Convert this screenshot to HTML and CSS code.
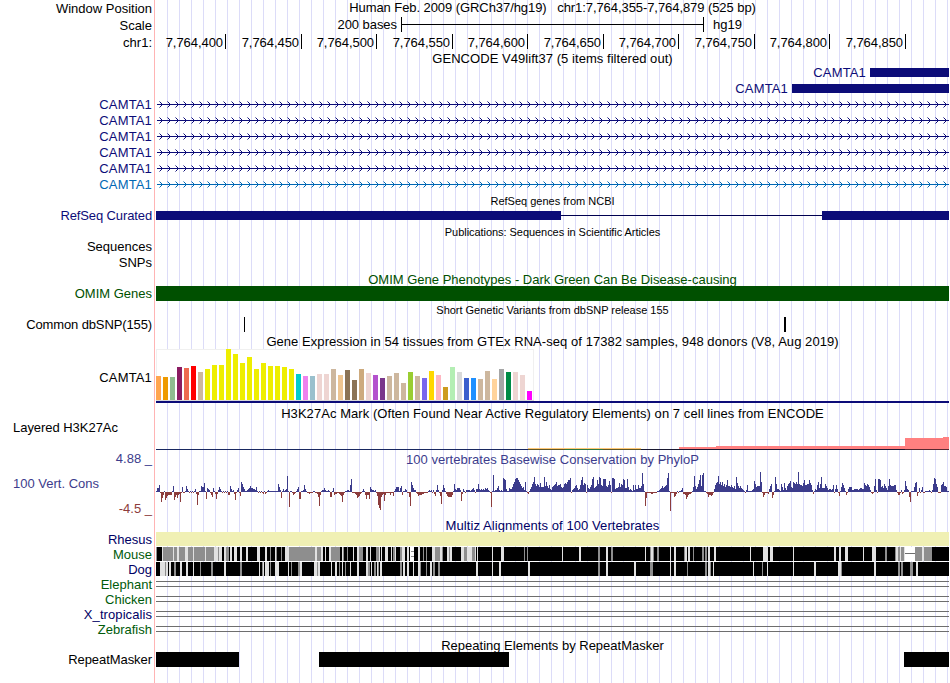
FILE: index.html
```html
<!DOCTYPE html>
<html lang="en">
<head>
<meta charset="utf-8">
<title>chr1:7,764,355-7,764,879</title>
<link rel="stylesheet" href="styles.css">
</head>
<body>
<main class="browser">
  <div class="row h17"><div class="label">Window Position</div><div class="title position">Human Feb. 2009 (GRCh37/hg19) &nbsp; chr1:7,764,355-7,764,879 (525 bp)</div></div>
  <div class="row h17"><div class="label">Scale</div><div class="scale"><span class="scale-text">200 bases</span><span class="scale-bar"></span><span class="scale-db">hg19</span></div></div>
  <div class="row h17"><div class="label">chr1:</div><div class="ruler"><span class="c70">7,764,400</span><span class="c76">7,764,450</span><span>7,764,500</span><span class="c76">7,764,550</span><span>7,764,600</span><span class="c76">7,764,650</span><span>7,764,700</span><span class="c76">7,764,750</span><span>7,764,800</span><span class="c76">7,764,850</span></div></div>
  <div class="row h13"><div></div><div class="title gencode">GENCODE V49lift37 (5 items filtered out)</div></div>
  <div class="row h16"><div></div><div class="exon"><span class="gene">CAMTA1</span><span class="exon-bar w79"></span></div></div>
  <div class="row h16"><div></div><div class="exon"><span class="gene">CAMTA1</span><span class="exon-bar w157"></span></div></div>
  <div class="row h16 navy"><div class="label gene">CAMTA1</div><svg class="intron" width="793" height="16"></svg></div>
  <div class="row h16 navy"><div class="label gene">CAMTA1</div><svg class="intron" width="793" height="16"></svg></div>
  <div class="row h16 navy"><div class="label gene">CAMTA1</div><svg class="intron" width="793" height="16"></svg></div>
  <div class="row h16 navy"><div class="label gene">CAMTA1</div><svg class="intron" width="793" height="16"></svg></div>
  <div class="row h16 navy"><div class="label gene">CAMTA1</div><svg class="intron" width="793" height="16"></svg></div>
  <div class="row h16 azure"><div class="label gene">CAMTA1</div><svg class="intron" width="793" height="16"></svg></div>
  <div class="row h16"><div></div><div class="title small t-ref">RefSeq genes from NCBI</div></div>
  <div class="row h16 navy"><div class="label refseq">RefSeq Curated</div><svg width="793" height="16" shape-rendering="crispEdges"><rect x="0" y="7" width="793" height="1" fill="#000050"/><rect x="0" y="3" width="405" height="9" fill="currentColor"/><rect x="666" y="3" width="127" height="9" fill="currentColor"/></svg></div>
  <div class="row h15"><div></div><div class="title small t-pub">Publications: Sequences in Scientific Articles</div></div>
  <div class="row h16"><div class="label">Sequences</div></div>
  <div class="row h16"><div class="label">SNPs</div></div>
  <div class="row h15 omim"><div></div><div class="title">OMIM Gene Phenotypes - Dark Green Can Be Disease-causing</div></div>
  <div class="row h15 omim"><div class="label">OMIM Genes</div><div class="fill"></div></div>
  <div class="row h16"><div></div><div class="title small t-snp">Short Genetic Variants from dbSNP release 155</div></div>
  <div class="row h16"><div class="label common">Common dbSNP(155)</div><svg width="793" height="16" shape-rendering="crispEdges"><rect x="88" y="0" width="1" height="15"/><rect x="628" y="0" width="2" height="15"/></svg></div>
  <div class="row h16"><div></div><div class="title t-gtex">Gene Expression in 54 tissues from GTEx RNA-seq of 17382 samples, 948 donors (V8, Aug 2019)</div></div>
  <div class="row h56"><div class="label gtex-label">CAMTA1</div><svg id="gtex" width="793" height="56" shape-rendering="crispEdges"></svg></div>
  <div class="row h16"><div></div><div class="title t-h3k">H3K27Ac Mark (Often Found Near Active Regulatory Elements) on 7 cell lines from ENCODE</div></div>
  <div class="row h30"><div class="label left h3k-label">Layered H3K27Ac</div><svg width="793" height="30" shape-rendering="crispEdges"><path fill="#ffc878" d="M372 27h113v1H372z"/><path fill="#ff8080" d="M523 26h37v-1h189v-8h38v-1h6v12H523z"/><path fill="#182860" d="M0 28h372v1H0z"/><path fill="#605828" d="M372 28h113v1H372z"/><path fill="#307840" d="M409 28h38v1h-38z"/><path fill="#181830" d="M485 28h264v1H485z"/><path fill="#582830" d="M749 28h44v1h-44z"/></svg></div>
  <div class="row h16 phylo"><div class="label">4.88 _</div><div class="title t-phylo">100 vertebrates Basewise Conservation by PhyloP</div></div>
  <div class="row h50"><div class="phylo-labels"><span class="phylo">100 Vert. Cons</span><span class="minimum">-4.5 _</span></div><svg id="phylop" width="793" height="50" shape-rendering="crispEdges"></svg></div>
  <div class="row h15 blue"><div></div><div class="title t-multiz">Multiz Alignments of 100 Vertebrates</div></div>
  <div class="row h15 blue"><div class="label">Rhesus</div><div class="fill rhesus"></div></div>
  <div class="row h15 green"><div class="label">Mouse</div><svg id="mouse" width="793" height="15" shape-rendering="crispEdges"></svg></div>
  <div class="row h15 blue"><div class="label">Dog</div><svg id="dog" width="793" height="15" shape-rendering="crispEdges"></svg></div>
  <div class="row h15 green"><div class="label">Elephant</div><div class="unaligned"></div></div>
  <div class="row h15 green"><div class="label">Chicken</div><div class="unaligned"></div></div>
  <div class="row h15 blue"><div class="label wide">X_tropicalis</div><div class="unaligned"></div></div>
  <div class="row h15 green"><div class="label">Zebrafish</div><div class="unaligned"></div></div>
  <div class="row h15"><div></div><div class="title t-rep">Repeating Elements by RepeatMasker</div></div>
  <div class="row h16"><div class="label repeat">RepeatMasker</div><svg width="793" height="16" shape-rendering="crispEdges"><path d="M0 0h83v15H0zM163 0h190v15H163zM748 0h45v15h-45z"/></svg></div>
</main>
<script src="tracks.js"></script>
</body>
</html>
```
FILE: styles.css
```css
body {
  margin: 0;
  background: #fff;
  color: #000;
  font: 13px/16px "Liberation Sans", Arial, sans-serif;
  overflow: hidden;
}
.browser {
  width: 949px;
  height: 683px;
  background:
    linear-gradient(#ffb4b4, #ffb4b4) 154px 0 / 1px 100% no-repeat,
    repeating-linear-gradient(90deg, #dcdcf8 0 1px, transparent 1px 12px) 167px 0 / 782px 100% no-repeat;
}
.row { display: grid; grid-template-columns: 152px 793px; column-gap: 4px; white-space: pre; }
.row svg { display: block; }
.h13 { height: 13px; }
.h15 { height: 15px; line-height: 15px; }
.h16 { height: 16px; }
.h17 { height: 17px; line-height: 17px; }
.h30 { height: 30px; }
.h50 { height: 50px; }
.h56 { height: 56px; }
.label { text-align: right; }
.left { text-align: left; padding-left: 13px; }
.h3k-label { line-height: 13px; letter-spacing: -0.04px; }
.title { text-align: center; }
.position { line-height: 15px; letter-spacing: -0.07px; }
.gencode { line-height: 15px; letter-spacing: 0.05px; }
.small { font-size: 11px; line-height: 18px; }
.t-pub { line-height: 16px; letter-spacing: -0.05px; }
.t-snp { letter-spacing: -0.02px; }
.t-gtex { line-height: 18px; letter-spacing: 0.055px; }
.t-h3k { line-height: 18px; letter-spacing: 0.06px; }
.t-phylo { line-height: 18px; letter-spacing: 0.02px; }
.t-multiz { line-height: 17px; letter-spacing: 0.08px; }
.t-rep { line-height: 17px; }
.gene, .gtex-label { line-height: 18px; letter-spacing: 0.15px; }
.gtex-label { line-height: 58px; }
.refseq { letter-spacing: -0.12px; }
.common { letter-spacing: -0.12px; }
.wide { letter-spacing: 0.08px; }
.repeat { letter-spacing: -0.06px; }
.navy, .gene { color: #0c0c78; }
.azure, .azure .gene { color: #0068b4; }
.omim { color: #005000; }
.omim .title { line-height: 17px; }
.fill { height: 15px; background: currentColor; }
.rhesus { height: 14px; background: #f0f0b4; }
.blue { color: #000064; }
.green { color: #005a0a; }
.phylo { color: #3c3c8c; }
.minimum { color: #8c3c3c; text-align: right; }

.scale { display: flex; line-height: 15px; }
.scale-text { width: 241px; margin-right: 4px; text-align: right; letter-spacing: -0.05px; }
.scale-bar {
  width: 301px;
  height: 15px;
  border: solid #000;
  border-width: 0 1px;
  background: linear-gradient(#000, #000) 0 7px / 100% 1px no-repeat;
}
.scale-db { margin-left: 9px; }
.ruler { display: flex; }
.ruler span {
  box-sizing: border-box;
  width: 75px;
  height: 15px;
  padding-right: 2px;
  border-right: 1px solid #000;
  text-align: right;
  letter-spacing: -0.06px;
}
.ruler .c70 { width: 70px; }
.ruler .c76 { width: 76px; }
.exon { display: flex; justify-content: flex-end; gap: 4px; }
.exon-bar { height: 9px; margin-top: 4px; background: #0c0c78; }
.w79 { width: 79px; }
.w157 { width: 157px; }
.phylo-labels { display: flex; flex-direction: column; }
.phylo-labels .phylo { padding: 9px 0 9px 13px; }
.unaligned {
  height: 4px;
  margin-top: 4px;
  border: solid #6e6e6e;
  border-width: 1px 0;
}
```
FILE: tracks.js
```js
const rect = (x, y, w, h, fill) =>
  `<rect x="${x}" y="${y}" width="${w}" height="${h}" fill="${fill}"/>`;

// Introns: a line with a strand arrow every 8 pixels.
document.querySelectorAll('.intron').forEach((svg) => {
  let faint = '', solid = '';
  for (let x = 3; x < 793; x += 8) {
    faint += `M${x} 5h1v1h-1zM${x} 11h1v1h-1z`;
    solid += `M${x + 1} 6h1v1h-1zM${x + 2} 7h1v3h-1zM${x + 1} 10h1v1h-1z`;
  }
  svg.setAttribute('shape-rendering', 'crispEdges');
  svg.innerHTML = `<path fill="currentColor" d="M1 8h792v1H1z${solid}"/><path fill="currentColor" fill-opacity="0.5" d="${faint}"/>`;
});

// GTEx: height and colour for each tissue.
const heights = [24,23,23,33,32,34,28,31,35,35,51,46,37,43,31,37,34,34,33,31,26,24,24,26,26,31,25,30,20,31,27,25,22,24,27,17,28,24,22,29,25,13,33,28,22,22,21,29,21,31,28,28,25,9];
const colors = ('FFA54F EE9A00 8FBC8F 8B1C62 EE6A50 FF0000 CDB79E ' + 'EEEE00 '.repeat(13) +
  '00CDCD EE82EE 9AC0CD EED5D2 EED5D2 CDB79E EEC591 8B7355 8B7355 CDAA7D EED5D2 B452CD 7A378B CDB79E CDB79E CDB79E 9ACD32 CDB79E 7A67EE FFD700 FFB6C1 CD9B1D B4EEB4 D9D9D9 3A5FCD 1E90FF CDB79E CDB79E FFD39B A6A6A6 008B45 EED5D2 EED5D2 FF00FF').split(' ');
document.getElementById('gtex').innerHTML =
  rect(0, 0, 378, 52, '#f0f0f0') + rect(1, 1, 376, 50, '#fff') + rect(0, 51, 378, 1, '#d8d8d8') +
  heights.map((h, i) => rect(i * 7, 51 - h, 5, h, '#' + colors[i])).join('') +
  rect(0, 52, 793, 2, '#0c0c78');

// PhyloP: one signed height per pixel, keyed by the first pixel of each run.
const scores = {
156:'1 4 4 7 -1 -10 -6 -3 1 -8 -6 -4 -3 -3 -3 -3 1 6 -8 -5 -3 -6 -3 -2 -10 -1 5 -1 -1 1 6 3 1 -1 1 -1 1 -1 1 3 -2 -13 -3 1',
200:'1 6 5 5 9 1 -7 4 3 2 -1 -3 -5 4 1 -2 -7 -2 2 5 3 1 -1 1 -1 1 -1 1 -3 -3 6 3 1 2 -2 -8 -1 2 4 -1 -4 10 8 5 3 1 1 2 3 4',
250:'6 4 4 3 3 2 5 1 -1 1 -1 1 -1 -2 1 -2 -1 1 2 1 1 1 1 1 1 1 1 1 8 5 2 -6 1 3 1 2 3 16 1 -15 1 1 -1 -3 -2 -1 1 3 5 -7',
300:'-7 1 1 2 7 3 1 -1 -1 -2 -1 -1 -1 1 1 -1 -1 -2 -5 -14 -3 1 2 2 4 2 1 1 2 1 -5 -5 1 4 -3 -2 -2 -1 -1 -2 -3 -4 -10 -3 -1 1 1 2 2 1',
350:'7 13 -1 -1 -1 -2 -3 -6 -5 -4 -2 -1 1 3 1 -3 -7 -3 -3 -7 5 3 2 2 1 2 -1 -4 -13 -16 -18 -5 -3 -2 -9 -3 -1 -1 -1 -1 -3 -1 -1 -4 1 3 5 5 5 1',
400:'4 6 -3 1 1 3 2 -1 -1 -5 -14 10 7 4 2 2 -1 -2 -4 -3 -3 -3 -2 -2 -1 -1 -1 -1 1 2 1 2 -1 2 -2 -4 2 7 2 -1 -4 -12 2 7 4 1 -2 -4 -5 -5',
450:'-5 -5 -3 1 8 3 2 4 4 4 2 -9 -2 3 1 -1 2 2 2 2 1 2 3 4 2 -1 3 3 8 3 2 3 2 3 2 4 3 4 2 1 -1 -15 1 17 1 2 2 4 6 2',
500:'1 2 1 14 13 12 3 1 1 4 3 3 5 8 10 13 14 14 12 10 8 6 4 5 2 10 1 -1 -2 1 3 5 8 10 15 8 6 8 7 5 9 5 5 5 15 6 10 6 4 7',
550:'3 2 5 6 7 8 10 6 7 7 8 5 4 5 8 9 8 10 12 12 14 -1 2 3 4 6 7 4 2 3 7 12 15 7 9 8 -1 7 4 3 5 7 13 15 4 5 6 12 8 15',
600:'14 7 6 13 13 13 6 5 7 11 7 -1 14 14 13 3 4 4 5 9 5 8 7 13 12 4 4 13 5 2 3 2 1 7 2 7 3 3 7 4 4 6 19 8 1 -14 -6 -1 -1 -1',
650:'-1 -2 -2 -1 -1 -1 -1 1 1 2 3 4 6 4 5 6 7 14 19 1 -19 -1 -1 -1 -5 -4 -2 1 -1 1 1 2 4 -2 -2 -3 -7 -5 -3 -2 -2 -1 1 5 16 6 3 5 8 12',
700:'17 6 17 19 1 1 -1 -2 -5 -3 -3 -4 -3 -1 3 7 9 10 16 8 10 7 10 6 8 5 7 12 6 6 5 7 5 4 6 3 15 9 6 4 6 4 3 2 1 -1 2 7 1 1',
750:'1 1 2 3 11 8 5 6 6 6 20 10 -1 -5 -3 -1 -1 -1 -2 3 6 8 -6 -3 1 15 8 3 3 2 1 8 5 2 9 4 2 6 8 9 11 5 4 10 9 8 10 8 20 8',
800:'7 7 6 9 12 7 7 8 8 12 9 7 2 -2 1 3 2 7 10 4 8 15 4 4 4 8 6 4 2 3 3 2 3 7 -1 3 7 3 -1 -4 1 5 9 7 4 1 -3 -1 3 5',
850:'5 5 2 2 3 3 3 3 2 3 4 4 3 3 9 7 6 8 7 5 2 -1 -2 -1 6 13 2 -1 13 13 12 5 6 4 8 6 4 2 6 13 7 6 6 6 7 7 2 -1 -3 -3',
900:'-1 2 -2 -1 2 11 6 3 2 -5 -10 1 1 1 5 9 10 -4 -1 4 -1 2 5 -1 -1 1 1 1 1 2 1 -1 2 8 14 13 8 5 -1 -1 -1 7 8 10 6 6 5 1 1'
};
let bars = '';
Object.entries(scores).forEach(([start, run]) => run.split(' ').map(Number).forEach((v, i) => {
  const x = +start + i - 156;
  bars += v > 0 ? rect(x, 25 - v, 1, v, '#3c3c8c') : rect(x, 25, 1, -v, '#8c3c3c');
}));
document.getElementById('phylop').innerHTML = bars;

// Pairwise alignments: [window x, fill, start-end spans in thirds of a pixel].
const L = '#e1e1e1', G = '#8e8e8e';
function alignment(id, groups) {
  let out = rect(0, 0, 793, 14, '#000');
  groups.forEach(([origin, fill, spans]) => spans.split(' ').forEach((s) => {
    const [a, b] = s.split('-').map(Number);
    out += rect(origin + a / 3 - 156, 0, (b - a) / 3, 14, fill);
  }));
  document.getElementById(id).innerHTML = out;
  return document.getElementById(id);
}
const mouse = alignment('mouse', [
  [150, L, '36-216 222-228 240-246 252-261 270-276 288-294 321-330 345-351 375-378 405-417 495-501 513-519 525-528 537-543 576-579'],
  [150, G, '18-21 39-69 72-81 87-105 114-129 132-165 168-192 204-207 228-237 360-363 378-381 393-396 417-495 501-513 543-570 579-582 591-594'],
  [350, L, '9-12 21-27 48-54 60-63 87-90 93-96 105-114 123-126 135-138 156-165 171-177 204-210 246-255 270-276 291-297 300-306 333-342 351-366 375-378 381-384 426-429 453-462'],
  [350, G, '27-39 78-87 129-135 150-156 219-222 228-231 255-270 276-279 297-300 342-351 366-375 522-525 531-534'],
  [550, L, '36-39 87-93 168-174 285-288 303-309 360-363 372-378 405-411 414-420 474-480 492-498'],
  [550, G, '144-150 183-189 300-303 309-312 321-327 402-405 429-432 456-462 465-471'],
  [750, L, '0-3 39-54 60-69 129-132 252-258 267-273 285-294 339-342 366-378 438-444 450-453 462-465 516-522'],
  [750, G, '405-411 435-438 444-450 453-462 495-516 522-546'],
  [350, '#fff', '180-192'],
  [750, '#fff', '465-495']
]);
mouse.innerHTML += rect(255, 4, 3, 1, G) + rect(255, 9, 3, 1, G) + rect(749, 6, 10, 1, '#6e6e6e');
alignment('dog', [
  [150, L, '30-45 48-54 57-63 90-96 108-114 129-132 222-228 327-330 339-342 345-357 375-387 414-417 450-456 492-501 504-510 543-546 555-561 576-579'],
  [150, G, '45-48 72-78 150-153 183-189 270-276 336-339 360-363 423-426 444-450 501-504 567-570 585-588'],
  [350, L, '0-3 21-27 48-54 63-66 81-84 90-96 159-165 171-177 189-192 204-210 240-246 378-384 426-429 447-453 534-540'],
  [350, G, '54-60 72-78 84-87 150-156 210-213 228-231 249-255 264-270'],
  [550, L, '168-174 252-258 360-363 372-378 474-480 489-492'],
  [550, G, '144-150 300-309 411-414 465-471 480-483'],
  [750, L, '9-12 51-54 129-132 192-198 264-273 372-378 498-504'],
  [750, G, '36-39 273-276 444-450 453-459 480-489']
]);
```
